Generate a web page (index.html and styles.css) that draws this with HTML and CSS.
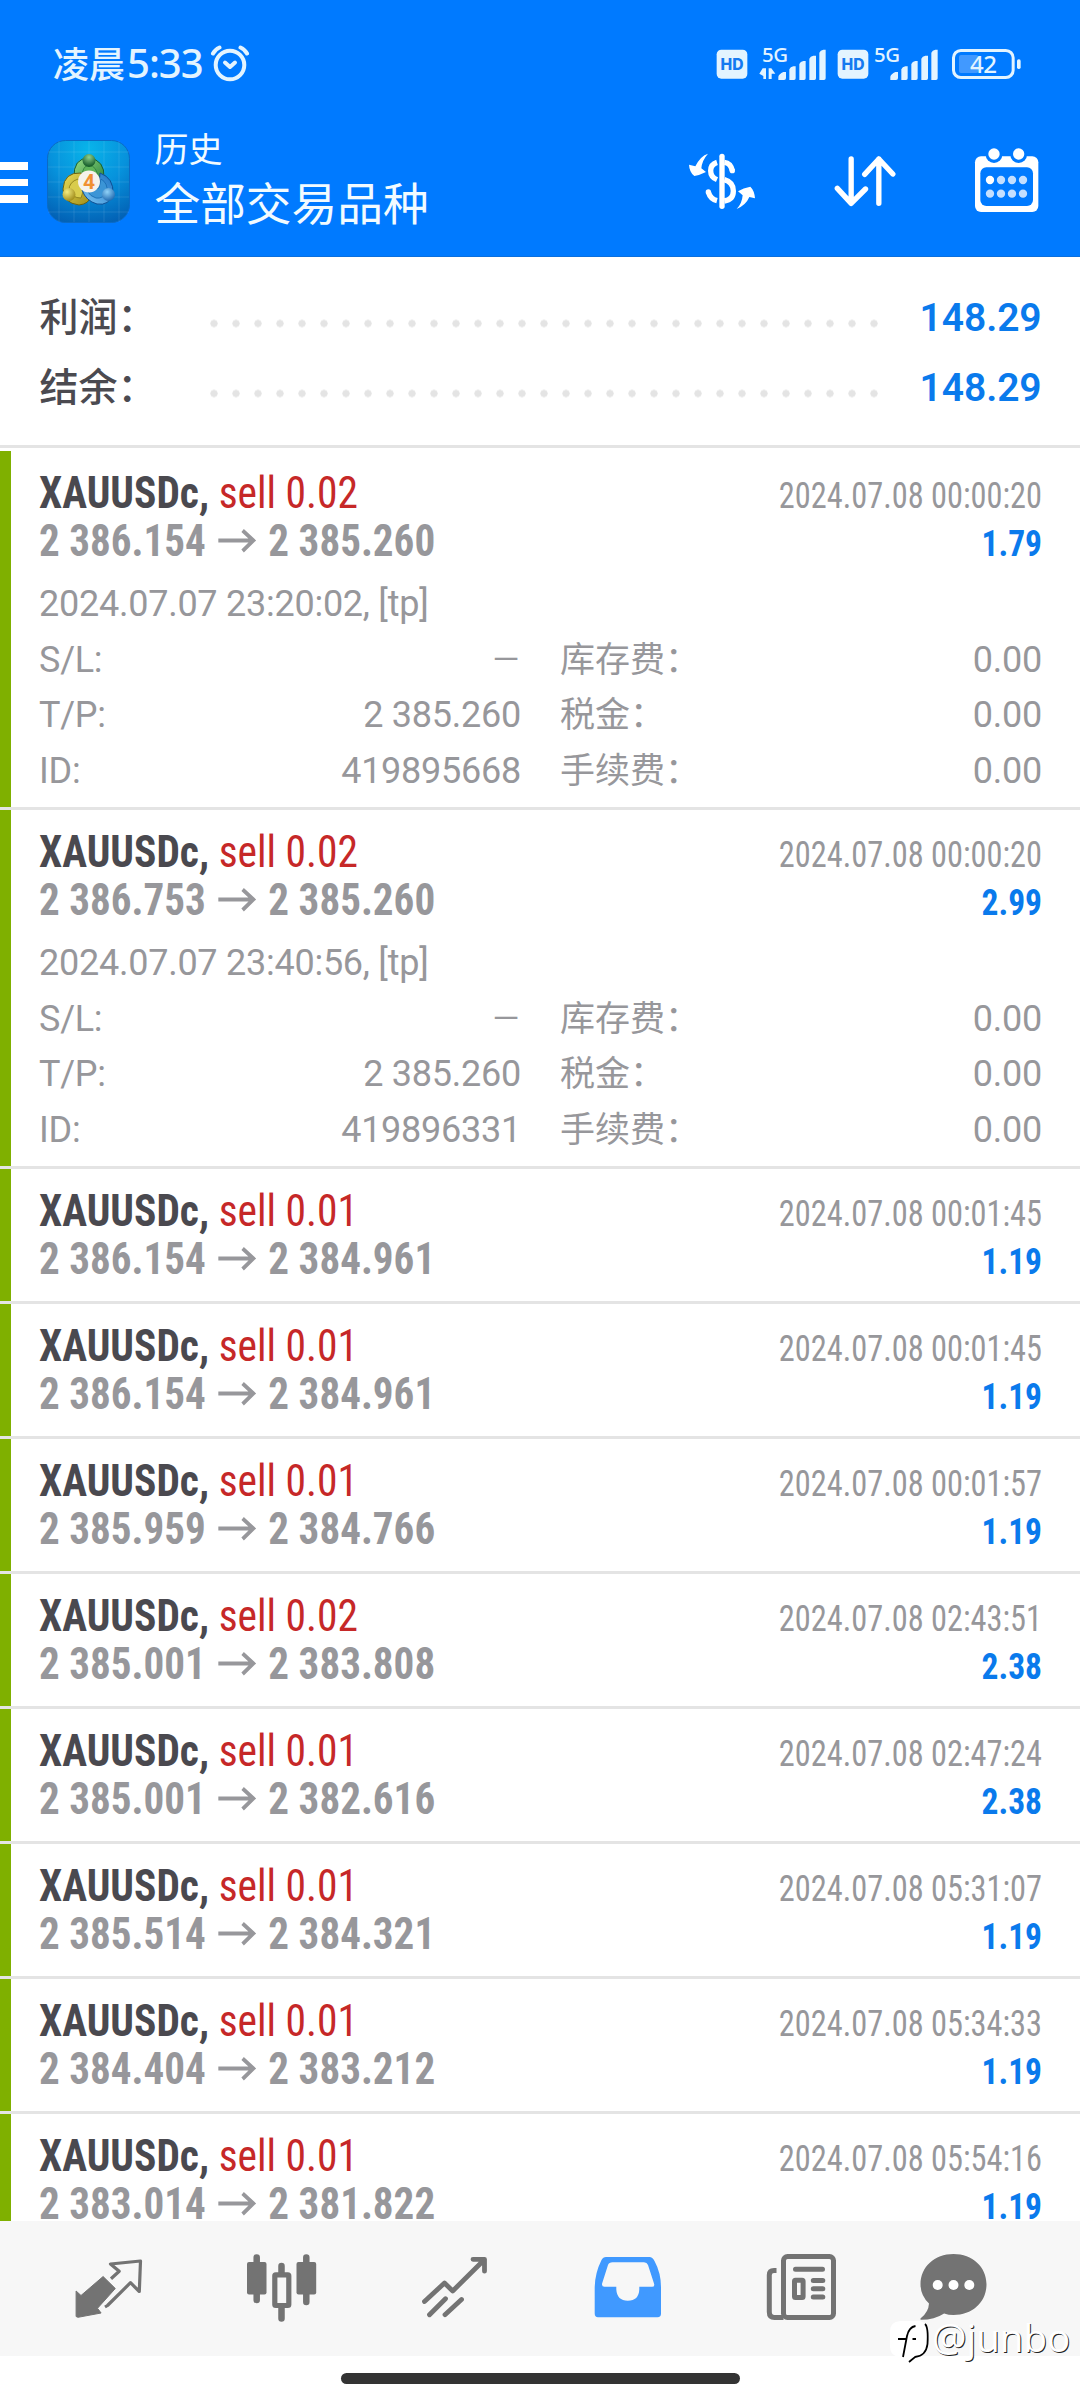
FILE: index.html
```html
<!DOCTYPE html>
<html lang="zh-CN">
<head>
<meta charset="utf-8">
<title>历史</title>
<link rel="stylesheet" href="styles.css">
</head>
<body>
<div class="screen">
  <header class="header">
    <div class="status">
      <div class="clock">凌晨<span class="clock-digits">5:33</span></div>
      <svg class="alarm" viewBox="0 0 40 38" fill="none" stroke="#e3f4ff" stroke-linecap="round" stroke-linejoin="round">
        <circle cx="20" cy="20" r="14.3" stroke-width="4"/>
        <path d="M15 17.500l5 4.500 5-4.500" stroke-width="4"/>
        <path d="M3 8.500Q5 4.500 9.500 2.500M37 8.500Q35 4.500 30.500 2.500" stroke-width="4"/>
      </svg>
      <svg class="signals" viewBox="225 102 930 177" fill="#e3f4ff">
        <rect x="230" y="149" width="92" height="87" rx="14"/>
        <text x="276" y="209" class="hd">HD</text>
        <text x="366" y="186" class="net">5G</text>
        <path d="M368 205h10v32h-8v-9l-12-7zM386 237v-32h8l12 16h-11v16z"/>
        <path id="bars" d="M415 240v-10q2-8 15-14h8v18q0 6-6 6zM448 240v-32q3-8 12-9h7v36q0 5-5 5zM478 240v-48q3-8 12-9h7v52q0 5-5 5zM508 240v-64q3-8 12-9h8v68q0 5-5 5zM538 240v-82q3-8 12-9h7v86q0 5-5 5z"/>
        <rect x="593" y="149" width="92" height="87" rx="14"/>
        <text x="639" y="209" class="hd">HD</text>
        <text x="702" y="186" class="net">5G</text>
        <use href="#bars" x="336"/>
        <rect x="957" y="165" width="58" height="54" rx="6" fill="#4199ff"/>
        <rect x="940.500" y="151.500" width="179" height="81" rx="22" fill="none" stroke="#e3f4ff" stroke-width="9"/>
        <rect x="1131" y="178" width="11" height="29" rx="5"/>
        <text x="1030" y="220" class="level">42</text>
      </svg>
    </div>
    <div class="toolbar">
      <div class="menu"><i></i><i></i><i></i></div>
      <svg class="logo" viewBox="0 0 83 83">
        <defs>
          <radialGradient id="bg" cx=".5" cy=".1" r=".95"><stop offset="0" stop-color="#08b4ea"/><stop offset=".5" stop-color="#0792dc"/><stop offset="1" stop-color="#0260b4"/></radialGradient>
          <linearGradient id="gr" x1="0" y1="0" x2="1" y2="1"><stop offset="0" stop-color="#9adf86"/><stop offset="1" stop-color="#1e7a35"/></linearGradient>
          <linearGradient id="ye" x1="0" y1="0" x2="1" y2="1"><stop offset="0" stop-color="#e8dc58"/><stop offset="1" stop-color="#a08c18"/></linearGradient>
          <linearGradient id="bl" x1="1" y1="0" x2="0" y2="1"><stop offset="0" stop-color="#1a72c4"/><stop offset="1" stop-color="#7cc6f4"/></linearGradient>
          <radialGradient id="gb" cx=".5" cy=".25" r=".7"><stop offset="0" stop-color="#8fd08c"/><stop offset="1" stop-color="#145c2a"/></radialGradient>
          <radialGradient id="yb" cx=".35" cy=".3" r=".8"><stop offset="0" stop-color="#f4ec80"/><stop offset="1" stop-color="#9a8412"/></radialGradient>
          <radialGradient id="bb" cx=".4" cy=".3" r=".8"><stop offset="0" stop-color="#90d2f8"/><stop offset="1" stop-color="#145ea8"/></radialGradient>
        </defs>
        <rect x=".5" y=".5" width="82" height="82" rx="18" fill="url(#bg)" stroke="#0b6ac4"/>
        <path d="M12 1v81M27 1v81M42 1v81M57 1v81M72 1v81M1 12h81M1 27h81M1 42h81M1 57h81M1 72h81" stroke="#fff" stroke-opacity=".1" fill="none"/>
        <path d="M27 38Q26 18 42 18Q58 20 57 38L50 46L34 44Z" fill="url(#gr)" stroke="#175f30"/>
        <path d="M34 38Q36 25 42 25Q50 26 51 38Z" fill="#5fb45a" stroke="#2a7a3c" stroke-width=".8"/>
        <path d="M34 33Q17 32 16 49Q16 63 32 65Q42 64 44 56L38 42Z" fill="url(#ye)" stroke="#6b6210"/>
        <path d="M31 39Q22 42 22 50Q25 58 34 58L37 48Z" fill="#d9cc4c" stroke="#857818" stroke-width=".8"/>
        <path d="M53 33Q67 38 66 54Q62 66 50 64Q39 61 35 50L52 46Z" fill="url(#bl)" stroke="#0f4f93"/>
        <path d="M54 39Q61 43 60 52Q56 59 49 58Q43 56 41 52L52 48Z" fill="#3b95d6" stroke="#176ab0" stroke-width=".8"/>
        <circle cx="42" cy="20.500" r="6.500" fill="url(#gb)"/>
        <circle cx="22" cy="54.500" r="6.500" fill="url(#yb)"/>
        <circle cx="61.500" cy="54.500" r="6.500" fill="url(#bb)"/>
        <circle cx="42" cy="41.500" r="11" fill="#f5f2ec"/>
        <text x="42" y="49.300" class="logo-digit">4</text>
      </svg>
      <div class="titles"><div class="title-small">历史</div><div class="title-main">全部交易品种</div></div>
      <div class="actions">
        <svg class="act-dollar" viewBox="24 32 204 180" fill="#fff">
          <path d="M111 66Q92 72 92 91Q92 110 111 118M133 66Q152 68 157 91M133 118Q160 126 160 152Q160 178 133 182M85 155Q91 176 111 181" fill="none" stroke="#fff" stroke-width="16"/>
          <circle cx="157" cy="91" r="8"/><circle cx="85" cy="155" r="8"/>
          <rect x="118" y="40" width="16" height="166" rx="8"/>
          <path d="M84 40Q62 46 46 78L27 73Q28 95 43 107Q60 104 78 95L64 84Q66 60 84 40ZM170 206Q186 190 188 165L174 153Q190 143 211 139Q223 150 225 174L208 170Q198 194 170 206Z"/>
        </svg>
        <svg class="act-sort" viewBox="582 464 186 156" fill="none" stroke="#fff" stroke-width="16" stroke-linecap="round" stroke-linejoin="round">
          <path d="M633.500 476V609M592 564l41.500 45 43-43M716.500 609V476M674 522l42.500-46 42 45"/>
        </svg>
        <svg class="act-cal" viewBox="1002 440 198 198" fill="#fff">
          <rect x="1005" y="468" width="190" height="167" rx="18"/>
          <circle cx="1062" cy="463" r="25" fill="#007aff"/><circle cx="1136" cy="463" r="25" fill="#007aff"/>
          <circle cx="1062" cy="461" r="17"/><circle cx="1136" cy="461" r="17"/>
          <rect x="1021" y="501" width="158" height="116" rx="18" fill="#007aff"/>
          <circle cx="1050" cy="539" r="12.500"/>
          <g fill="#c4dfff"><circle cx="1083" cy="539" r="12.500"/><circle cx="1116" cy="539" r="12.500"/><circle cx="1149" cy="539" r="12.500"/><circle cx="1050" cy="580" r="12.500"/><circle cx="1083" cy="580" r="12.500"/><circle cx="1116" cy="580" r="12.500"/><circle cx="1149" cy="580" r="12.500"/></g>
        </svg>
      </div>
    </div>
  </header>

  <section class="summary">
    <div class="sum-row"><span class="sum-label">利润：</span><span class="dots"></span><span class="sum-value">148.29</span></div>
    <div class="sum-row"><span class="sum-label">结余：</span><span class="dots"></span><span class="sum-value">148.29</span></div>
  </section>

  <main class="deals">
    <article class="deal open">
      <div class="line"><span class="symbol">XAUUSDc, <b class="side">sell 0.02</b></span><span class="time">2024.07.08 00:00:20</span></div>
      <div class="line"><span class="price">2 386.154<svg class="arrow" viewBox="0 0 40 24"><path d="M0 11.500H37M26 1.500L37.500 11.500L26 22"/></svg>2 385.260</span><span class="profit">1.79</span></div>
      <div class="details">
        <div class="wide">2024.07.07 23:20:02, [tp]</div>
        <span>S/L:</span><span class="num dash">–</span><span class="cjk">库存费：</span><span class="num">0.00</span>
        <span>T/P:</span><span class="num">2 385.260</span><span class="cjk">税金：</span><span class="num">0.00</span>
        <span>ID:</span><span class="num">419895668</span><span class="cjk">手续费：</span><span class="num">0.00</span>
      </div>
    </article>
    <article class="deal open">
      <div class="line"><span class="symbol">XAUUSDc, <b class="side">sell 0.02</b></span><span class="time">2024.07.08 00:00:20</span></div>
      <div class="line"><span class="price">2 386.753<svg class="arrow" viewBox="0 0 40 24"><path d="M0 11.500H37M26 1.500L37.500 11.500L26 22"/></svg>2 385.260</span><span class="profit">2.99</span></div>
      <div class="details">
        <div class="wide">2024.07.07 23:40:56, [tp]</div>
        <span>S/L:</span><span class="num dash">–</span><span class="cjk">库存费：</span><span class="num">0.00</span>
        <span>T/P:</span><span class="num">2 385.260</span><span class="cjk">税金：</span><span class="num">0.00</span>
        <span>ID:</span><span class="num">419896331</span><span class="cjk">手续费：</span><span class="num">0.00</span>
      </div>
    </article>
    <article class="deal">
      <div class="line"><span class="symbol">XAUUSDc, <b class="side">sell 0.01</b></span><span class="time">2024.07.08 00:01:45</span></div>
      <div class="line"><span class="price">2 386.154<svg class="arrow" viewBox="0 0 40 24"><path d="M0 11.500H37M26 1.500L37.500 11.500L26 22"/></svg>2 384.961</span><span class="profit">1.19</span></div>
    </article>
    <article class="deal">
      <div class="line"><span class="symbol">XAUUSDc, <b class="side">sell 0.01</b></span><span class="time">2024.07.08 00:01:45</span></div>
      <div class="line"><span class="price">2 386.154<svg class="arrow" viewBox="0 0 40 24"><path d="M0 11.500H37M26 1.500L37.500 11.500L26 22"/></svg>2 384.961</span><span class="profit">1.19</span></div>
    </article>
    <article class="deal">
      <div class="line"><span class="symbol">XAUUSDc, <b class="side">sell 0.01</b></span><span class="time">2024.07.08 00:01:57</span></div>
      <div class="line"><span class="price">2 385.959<svg class="arrow" viewBox="0 0 40 24"><path d="M0 11.500H37M26 1.500L37.500 11.500L26 22"/></svg>2 384.766</span><span class="profit">1.19</span></div>
    </article>
    <article class="deal">
      <div class="line"><span class="symbol">XAUUSDc, <b class="side">sell 0.02</b></span><span class="time">2024.07.08 02:43:51</span></div>
      <div class="line"><span class="price">2 385.001<svg class="arrow" viewBox="0 0 40 24"><path d="M0 11.500H37M26 1.500L37.500 11.500L26 22"/></svg>2 383.808</span><span class="profit">2.38</span></div>
    </article>
    <article class="deal">
      <div class="line"><span class="symbol">XAUUSDc, <b class="side">sell 0.01</b></span><span class="time">2024.07.08 02:47:24</span></div>
      <div class="line"><span class="price">2 385.001<svg class="arrow" viewBox="0 0 40 24"><path d="M0 11.500H37M26 1.500L37.500 11.500L26 22"/></svg>2 382.616</span><span class="profit">2.38</span></div>
    </article>
    <article class="deal">
      <div class="line"><span class="symbol">XAUUSDc, <b class="side">sell 0.01</b></span><span class="time">2024.07.08 05:31:07</span></div>
      <div class="line"><span class="price">2 385.514<svg class="arrow" viewBox="0 0 40 24"><path d="M0 11.500H37M26 1.500L37.500 11.500L26 22"/></svg>2 384.321</span><span class="profit">1.19</span></div>
    </article>
    <article class="deal">
      <div class="line"><span class="symbol">XAUUSDc, <b class="side">sell 0.01</b></span><span class="time">2024.07.08 05:34:33</span></div>
      <div class="line"><span class="price">2 384.404<svg class="arrow" viewBox="0 0 40 24"><path d="M0 11.500H37M26 1.500L37.500 11.500L26 22"/></svg>2 383.212</span><span class="profit">1.19</span></div>
    </article>
    <article class="deal">
      <div class="line"><span class="symbol">XAUUSDc, <b class="side">sell 0.01</b></span><span class="time">2024.07.08 05:54:16</span></div>
      <div class="line"><span class="price">2 383.014<svg class="arrow" viewBox="0 0 40 24"><path d="M0 11.500H37M26 1.500L37.500 11.500L26 22"/></svg>2 381.822</span><span class="profit">1.19</span></div>
    </article>
  </main>

  <nav class="tabs">
    <svg viewBox="21.500 0 173 135"><path fill="#737373" stroke="#737373" stroke-linejoin="round" d="M75.600 70L80.500 74.500L102.600 55.500L114.800 67.500L97 87.300L100.600 92L77.500 96.300L75.600 95.500Z"/><path fill="none" stroke="#737373" stroke-width="3.200" stroke-linejoin="round" d="M110.500 57.800L118.700 50.300L110 43L140 40L138.800 70.500L130 61.700L107 84.500L104.500 86"/></svg>
    <svg viewBox="194.500 0 173 135"><g stroke="#737373" stroke-width="6.500" stroke-linecap="round"><path d="M256.200 36.500V79M305.800 36.500V81M281 45V55M281 85V97.500"/></g><g fill="#737373"><rect x="246.500" y="41" width="19.500" height="32.500" rx="2"/><rect x="296" y="41" width="19.700" height="32.500" rx="2"/></g><rect x="274.300" y="53.800" width="14" height="30.700" rx="1" fill="#f7f7f7" stroke="#737373" stroke-width="5.200"/></svg>
    <svg viewBox="367.500 0 173 135" fill="none" stroke="#737373" stroke-width="4.800" stroke-linecap="round" stroke-linejoin="round"><path d="M424 80.500L444 62L452.200 70L483.500 39M472.500 38.300H484V50.200M429 93.700L445 77.700M444.500 93.700L461 78.500"/></svg>
    <svg viewBox="540.500 0 173 135"><path fill="#4099ff" fill-rule="evenodd" d="M605.500 36H649Q652 36 654 40Q660.500 52 660.500 66V92.500Q660.500 96.300 657 96.300H597.500Q594.200 96.300 594.200 92.500V66Q594.500 52 601 39Q602.500 36 605.500 36ZM612 41.300Q608.500 41.300 607.500 44L601.600 62.500Q601 65.800 604 65.800H615.800V68.500Q616.500 79.700 627.300 79.700Q638.300 79.700 638.800 68.500V65.800H651.500Q654.500 65.800 653.500 62.500L647.500 44Q646.500 41.300 643.500 41.300Z"/></svg>
    <svg viewBox="713.500 0 173 135" fill="none" stroke="#737373" stroke-width="5" stroke-linecap="round" stroke-linejoin="round"><rect x="783" y="35.500" width="50" height="61" rx="4"/><path stroke-linecap="butt" d="M776 49.500H773.500Q768.800 49.500 768.800 54V91Q768.800 96.500 774 96.500H783"/><path d="M795 48.300H822M812.800 59.500H822.300M812.800 67.800H822.300M812.800 76H822.300"/><rect x="794" y="59.200" width="8.600" height="17.300" rx="1"/></svg>
    <svg viewBox="886.500 0 173 135"><path fill="#737373" d="M953 33C972 33 986 46 986 63.300C986 81 972 94 953 94Q948 94 943.600 92.500Q934 98.800 920.500 98.800Q919.200 98 920.500 97Q928 91 928.500 82.500Q920 74.500 920 63.300C920 46 934 33 953 33Z"/><g fill="#fff"><circle cx="937.200" cy="64" r="5"/><circle cx="953" cy="64" r="5"/><circle cx="968.800" cy="64" r="5"/></g></svg>
  </nav>
  <footer class="gesture"><div class="pill"></div></footer>
  <div class="watermark">
    <svg viewBox="0 0 44 46"><path d="M10 1H30Q38 3 38 14V26Q37 37 25 37H10Q0 36 0 27V11Q0 2 10 1Z" fill="#fff"/><path d="M25.500 6Q19 7 17 16L13 37M8 19H17M22.500 19H26M35 4Q38.500 7 37.500 24Q36 36 25 37L19 42" fill="none" stroke="#000" stroke-width="1.800"/></svg>
    <span>@junbo</span>
  </div>
</div>
</body>
</html>
```
FILE: styles.css
```css
* { box-sizing: border-box; }
body { margin: 0; background: #fff; }
svg { display: block; flex: none; }
.screen {
  position: relative; width: 1080px; height: 2400px; overflow: hidden;
  display: flex; flex-direction: column;
  font-family: Roboto, "Noto Sans CJK SC", sans-serif; background: #fff;
}

/* header */
.header { height: 257px; flex: none; background: #007aff; border-bottom: 1px solid #0b6fdd; color: #f2fbff; }
.status { height: 116px; display: flex; padding-left: 53px; }
.clock { width: 157px; padding-top: 32px; font: 500 36px/60px "Noto Sans CJK SC", sans-serif; color: #e3f4ff; white-space: nowrap; }
.clock-digits { font: 500 40px/60px "Noto Sans", sans-serif; letter-spacing: -1px; margin-left: 2px; }
.alarm { width: 40px; height: 38px; margin-top: 45px; }
.signals { width: 310px; height: 59px; margin: 34px 0 0 465px; }
.hd { font: 800 47px Inter, sans-serif; fill: #1479f0; text-anchor: middle; }
.net { font: 500 61px "Noto Sans", sans-serif; letter-spacing: -1px; }
.level { font: 500 72px "Noto Sans", sans-serif; text-anchor: middle; letter-spacing: -1px; }
.toolbar { height: 140px; display: flex; }
.menu { width: 28px; padding-top: 46px; display: flex; flex-direction: column; gap: 9px; }
.menu i { height: 7.700px; background: #fff; }
.logo { width: 83px; height: 83px; margin: 23.500px 0 0 18.500px; }
.logo-digit { font: 700 21px Roboto, sans-serif; fill: #f09032; text-anchor: middle; }
.titles { margin-left: 25px; width: 421px; padding-top: 8px; font-family: "Noto Sans CJK SC", sans-serif; white-space: nowrap; }
.title-small { font-size: 34px; line-height: 48px; }
.title-main { font-size: 45.700px; line-height: 59px; }
.actions { display: flex; padding-top: 30px; margin-left: 112.500px; }
.act-dollar { width: 68px; height: 60px; margin-top: 4.500px; }
.act-sort { width: 62px; height: 52px; margin: 8.500px 0 0 78px; }
.act-cal { width: 66px; height: 66px; margin: .7px 0 0 78px; }

/* totals */
.summary { height: 191px; flex: none; padding: 26px 38.500px 0 39.500px; border-bottom: 3px solid #e4e4e4; }
.sum-row { height: 70px; display: flex; align-items: baseline; line-height: 70px; }
.sum-label { width: 170px; font-size: 39px; font-weight: 500; color: #4b4a50; white-space: nowrap; }
.dots { width: 682px; height: 8px; margin: 0 0 6px -7px; background: radial-gradient(circle, #e4e4e4 3.400px, transparent 3.900px) 0 0 / 22px 8px repeat-x; align-self: center; transform: translateY(5.500px); margin-bottom: 0; }
.sum-value { margin-left: auto; font-size: 39px; font-weight: 600; color: #0a7aec; letter-spacing: -.1px; }

/* deals */
.deals { flex: 1; min-height: 0; overflow: hidden; padding-top: 3px; }
.deal { height: 135px; padding: 18px 38px 0 39px; border-bottom: 3px solid #e4e4e4; background: linear-gradient(90deg, #7fb000 11px, transparent 11px) padding-box; }
.deal.open { height: 359px; }
.line { height: 48px; line-height: 48px; display: flex; justify-content: space-between; align-items: baseline; white-space: nowrap; font-stretch: 75%; }
.symbol { font-size: 45px; font-weight: 700; color: #4a494f; transform: scaleX(.922); transform-origin: left; }
.side { font-weight: 400; color: #c62828; }
.time { font-size: 36px; color: #97979b; transform: scaleX(.898); transform-origin: right; }
.price { font-size: 44px; font-weight: 700; color: #97979b; display: flex; align-items: center; height: 48px; transform: scaleX(.934); transform-origin: left; }
.arrow { width: 44px; height: 24px; margin: 0 11.500px; fill: none; stroke: #97979b; stroke-width: 4; }
.profit { font-size: 36px; font-weight: 700; color: #0a7aec; transform: scaleX(.93); transform-origin: right; }
.details { margin-top: 12px; display: grid; grid-template-columns: 121px 361px 180px 1fr; line-height: 55.670px; font-size: 36px; color: #97979b; white-space: nowrap; letter-spacing: -.25px; }
.wide { grid-column: 1 / -1; }
.num { text-align: right; }
.dash { font-size: 46px; font-weight: 300; }
.cjk { padding-left: 39px; font-size: 35px; letter-spacing: 0; }

/* bottom navigation */
.tabs { height: 135px; flex: none; background: #f7f7f7; display: flex; padding-left: 21.500px; }
.tabs svg { width: 173px; height: 135px; }
.gesture { height: 44px; flex: none; display: flex; justify-content: center; padding-top: 17.300px; }
.pill { width: 399px; height: 10.500px; border-radius: 6px; background: #333; }
.watermark { position: absolute; left: 890px; top: 2320px; display: flex; }
.watermark svg { width: 44px; height: 46px; margin-right: -2px; }
.watermark span { font: 400 38.500px/34px "Open Sans", sans-serif; color: #fff; text-shadow: 1px 1px 0 #222; }
```
